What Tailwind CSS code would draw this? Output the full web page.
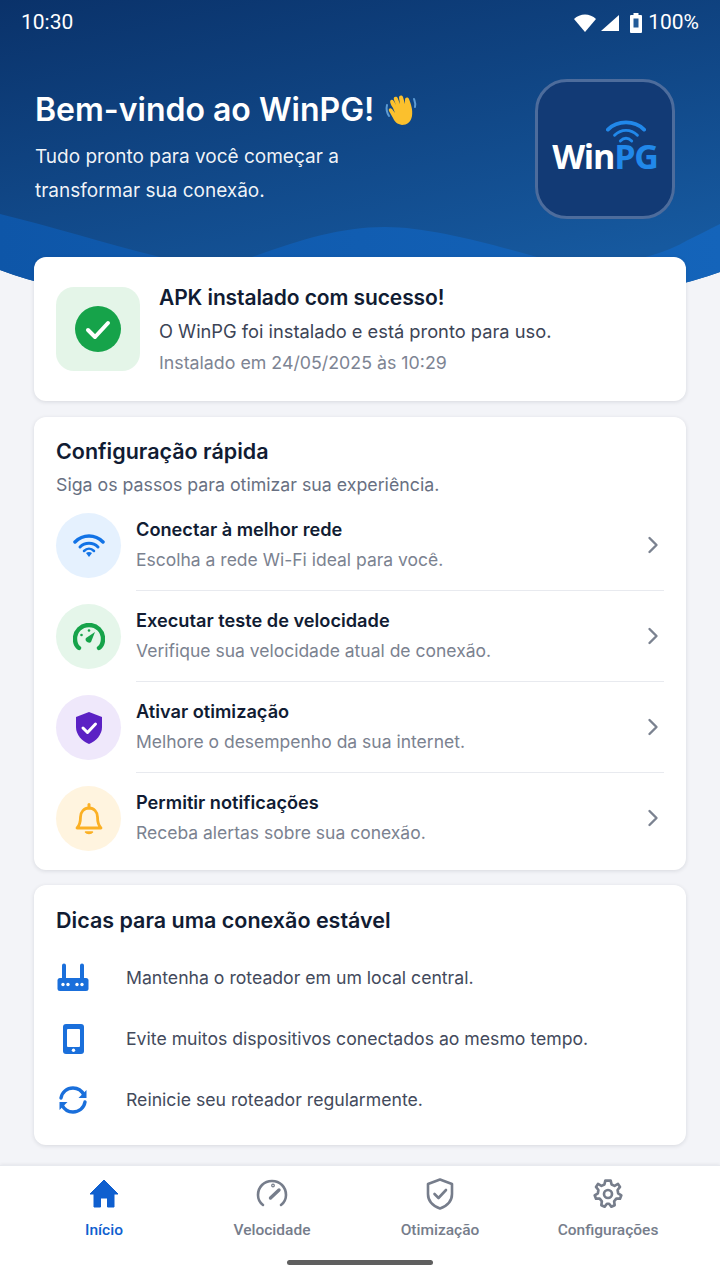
<!DOCTYPE html>
<html lang="pt-BR">
<head>
  <meta charset="UTF-8">
  <meta name="viewport" content="width=device-width, initial-scale=1">
  <title>WinPG - Início</title>
  <script src="https://cdn.jsdelivr.net/npm/@tailwindcss/browser@4"></script>
</head>
<body class="bg-[#f3f4f8] font-['Inter',sans-serif]">
<div class="relative w-[720px] h-[1280px] overflow-hidden flex flex-col">

  <!-- Header background -->
  <svg class="absolute left-0 top-0" width="720" height="300" viewBox="0 0 720 300">
    <defs>
      <linearGradient id="hdr" x1="0" y1="0" x2="0.5" y2="1">
        <stop offset="0" stop-color="#0a326a"/>
        <stop offset="1" stop-color="#16599f"/>
      </linearGradient>
      <linearGradient id="wave" x1="0" y1="0" x2="1" y2="0">
        <stop offset="0" stop-color="#0e56a8"/>
        <stop offset="1" stop-color="#1464ba"/>
      </linearGradient>
    </defs>
    <path d="M0 0H720V272Q610 312 360 312T0 270Z" fill="url(#hdr)"/>
    <path d="M0 214C50 226 110 245 160 257C190 266 220 264 252 257C300 240 340 227 385 227C430 227 490 244 537 257C590 272 650 262 688 240C700 234 710 229 720 224V272Q610 312 360 312T0 270Z" fill="url(#wave)"/>
  </svg>

  <!-- Status bar -->
  <div class="relative h-[44px] shrink-0 pl-[21px] pr-[21px] pt-[2px] flex items-center justify-between text-white font-['Roboto',sans-serif] text-[21px]">
    <span>10:30</span>
    <div class="flex items-center">
      <svg width="24" height="20" viewBox="0 0 24 20" class="mr-[3px]"><path d="M1 6C7 0 17 0 23 6L12 19Z" fill="#fff"/></svg>
      <svg width="20" height="18" viewBox="0 0 20 18" class="mr-[9px]"><path d="M19 1V17H1Z" fill="#fff"/></svg>
      <svg width="14" height="20" viewBox="0 0 14 20" class="mr-[5px]"><path d="M4.500 0H9.500V2H12Q13 2 13 3V19Q13 20 12 20H2Q1 20 1 19V3Q1 2 2 2H4.500Z" fill="#fff"/><rect x="4.500" y="5.500" width="5" height="9" fill="#235b98"/></svg>
      <span>100%</span>
    </div>
  </div>

  <!-- Hero -->
  <div class="relative h-[213px] shrink-0 pl-[35px] pr-[45px] flex justify-between">
    <div class="pt-[44px]">
      <h1 class="flex items-center text-white text-[32px] leading-[44px] font-semibold">
        Bem-vindo ao WinPG!
        <svg width="34" height="34" viewBox="0 0 34 34" class="ml-[10px]">
          <path d="M3 12C2 16 3 20 5 23M30 6C31 9 32 11 31 14" fill="none" stroke="#5b9bd5" stroke-width="2" stroke-linecap="round"/>
          <path d="M9 15C7 12 5 8 7 7C9 6 10 8 12 12L10 7C9 4 11 3 13 4C14 5 15 9 16 11L15 5C15 2 18 2 19 4L21 11L21 7C21 4 24 4 25 6C27 11 29 17 28 23C27 29 23 32 18 32C13 31 11 29 9 25L5 18C4 16 6 14 8 16L11 20Z" fill="#fbc02d"/>
        </svg>
      </h1>
      <p class="mt-[8px] text-white/95 text-[19px] leading-[34px]">Tudo pronto para você começar a<br>transformar sua conexão.</p>
    </div>
    <div class="mt-[35px] w-[140px] h-[140px] rounded-[32px] border-[3px] border-[#4d6c9c] bg-[#123a75] flex flex-col items-center">
      <svg width="40" height="25" viewBox="0 0 42 26" class="mt-[37px] ml-[42px]">
        <path d="M2 11C12 1 30 1 40 11" fill="none" stroke="#2188ea" stroke-width="4" stroke-linecap="round"/>
        <path d="M9 17C16 10 26 10 33 17" fill="none" stroke="#2188ea" stroke-width="3" stroke-linecap="round"/>
        <path d="M15 23C19 19 23 19 27 23" fill="none" stroke="#2188ea" stroke-width="3" stroke-linecap="round"/>
      </svg>
      <div class="-mt-[7px] text-[34px] leading-[38px] font-['Open_Sans',sans-serif] font-bold tracking-[-1.200px] text-white">Win<span class="text-[#2188ea]">PG</span></div>
    </div>
  </div>

  <!-- Install status -->
  <section class="relative mx-[34px] h-[144px] rounded-[12px] bg-white shadow-[0_1px_4px_rgba(15,23,42,0.12)] pl-[22px] flex items-center">
    <div class="w-[84px] h-[84px] rounded-[18px] bg-[#e4f5e8] flex items-center justify-center">
      <svg width="46" height="46" viewBox="0 0 46 46">
        <circle cx="23" cy="23" r="23" fill="#16a34a"/>
        <path d="M13 24L20 31L33 17" fill="none" stroke="#fff" stroke-width="4" stroke-linecap="round" stroke-linejoin="round"/>
      </svg>
    </div>
    <div class="ml-[19px]">
      <h2 class="text-[#111c33] text-[21px] leading-[28px] font-semibold tracking-[-0.1px]">APK instalado com sucesso!</h2>
      <p class="mt-[7px] text-[#3c4456] text-[18.300px] leading-[24px]">O WinPG foi instalado e está pronto para uso.</p>
      <p class="mt-[8px] text-[#7d8493] text-[17.800px] leading-[24px]">Instalado em 24/05/2025 às 10:29</p>
    </div>
  </section>

  <!-- Quick setup -->
  <section class="relative mx-[34px] mt-[16px] h-[453px] rounded-[12px] bg-white shadow-[0_1px_4px_rgba(15,23,42,0.12)] pl-[22px] pr-[22px] pt-[20px]">
    <h2 class="text-[#111c33] text-[21.500px] leading-[28px] font-semibold">Configuração rápida</h2>
    <p class="mt-[8px] text-[#687082] text-[17.750px] leading-[24px]">Siga os passos para otimizar sua experiência.</p>
    <div class="mt-[16px] flex flex-col">

      <div class="h-[91px] flex">
        <div class="w-[65px] h-[65px] rounded-full bg-[#e5f1fe] flex items-center justify-center shrink-0">
          <svg width="32" height="26" viewBox="0 0 32 26">
            <path d="M2 9C10 1 22 1 30 9" fill="none" stroke="#1273e6" stroke-width="3.500" stroke-linecap="round"/>
            <path d="M7 14C12 9 20 9 25 14" fill="none" stroke="#1273e6" stroke-width="3" stroke-linecap="round"/>
            <path d="M11 18C14 15 18 15 21 18" fill="none" stroke="#1273e6" stroke-width="2.500" stroke-linecap="round"/>
            <path d="M13 20C15 18.500 17 18.500 19 20L16 24Z" fill="#1273e6"/>
          </svg>
        </div>
        <div class="ml-[15px] flex-1 h-[78px] border-b border-[#e8eaef] flex items-start justify-between">
          <div>
            <h3 class="mt-[3px] text-[#111c33] text-[18.200px] leading-[26px] font-semibold">Conectar à melhor rede</h3>
            <p class="mt-[5px] text-[#7b8290] text-[17.500px] leading-[26px]">Escolha a rede Wi-Fi ideal para você.</p>
          </div>
          <svg width="12" height="18" viewBox="0 0 12 18" class="mt-[23px] mr-[5px]"><path d="M2.500 2L9.500 9L2.500 16" fill="none" stroke="#7b8290" stroke-width="2.400" stroke-linecap="round" stroke-linejoin="round"/></svg>
        </div>
      </div>

      <div class="h-[91px] flex">
        <div class="w-[65px] h-[65px] rounded-full bg-[#e5f6ea] flex items-center justify-center shrink-0">
          <svg width="32" height="28" viewBox="0 0 32 28">
            <path d="M6 25C3 23 2 19 2 16C2 8 8 2 16 2C24 2 30 8 30 16C30 19 29 23 26 25" fill="none" stroke="#16a34a" stroke-width="4.400" stroke-linecap="round"/>
            <path d="M13 15L22 9L18 19C16 21 11 18 13 15Z" fill="#16a34a"/>
            <circle cx="16" cy="7.500" r="1.300" fill="#16a34a"/><circle cx="8.500" cy="12" r="1.300" fill="#16a34a"/>
          </svg>
        </div>
        <div class="ml-[15px] flex-1 h-[78px] border-b border-[#e8eaef] flex items-start justify-between">
          <div>
            <h3 class="mt-[3px] text-[#111c33] text-[18.200px] leading-[26px] font-semibold">Executar teste de velocidade</h3>
            <p class="mt-[5px] text-[#7b8290] text-[17.500px] leading-[26px]">Verifique sua velocidade atual de conexão.</p>
          </div>
          <svg width="12" height="18" viewBox="0 0 12 18" class="mt-[23px] mr-[5px]"><path d="M2.500 2L9.500 9L2.500 16" fill="none" stroke="#7b8290" stroke-width="2.400" stroke-linecap="round" stroke-linejoin="round"/></svg>
        </div>
      </div>

      <div class="h-[91px] flex">
        <div class="w-[65px] h-[65px] rounded-full bg-[#efe8fb] flex items-center justify-center shrink-0">
          <svg width="28" height="32" viewBox="0 0 28 32">
            <path d="M14 0L27 5V15C27 23 21 29 14 32C7 29 1 23 1 15V5Z" fill="#5b21c4"/>
            <path d="M8 16L12.500 20.500L20.500 12" fill="none" stroke="#fff" stroke-width="3" stroke-linecap="round" stroke-linejoin="round"/>
          </svg>
        </div>
        <div class="ml-[15px] flex-1 h-[78px] border-b border-[#e8eaef] flex items-start justify-between">
          <div>
            <h3 class="mt-[3px] text-[#111c33] text-[18.200px] leading-[26px] font-semibold">Ativar otimização</h3>
            <p class="mt-[5px] text-[#7b8290] text-[17.500px] leading-[26px]">Melhore o desempenho da sua internet.</p>
          </div>
          <svg width="12" height="18" viewBox="0 0 12 18" class="mt-[23px] mr-[5px]"><path d="M2.500 2L9.500 9L2.500 16" fill="none" stroke="#7b8290" stroke-width="2.400" stroke-linecap="round" stroke-linejoin="round"/></svg>
        </div>
      </div>

      <div class="h-[91px] flex">
        <div class="w-[65px] h-[65px] rounded-full bg-[#fff4df] flex items-center justify-center shrink-0">
          <svg width="28" height="32" viewBox="0 0 28 32">
            <path d="M2 25H26C23 22 22.500 19 22.500 14C22.500 9 19 5 14 5C9 5 5.500 9 5.500 14C5.500 19 5 22 2 25Z" fill="none" stroke="#fbb024" stroke-width="2.800" stroke-linejoin="round"/>
            <path d="M14 1.500V5" stroke="#fbb024" stroke-width="3" stroke-linecap="round"/>
            <path d="M10.500 29C12 31 16 31 17.500 29Z" fill="#fbb024" stroke="#fbb024" stroke-width="1.500" stroke-linejoin="round"/>
          </svg>
        </div>
        <div class="ml-[15px] flex-1 flex items-start justify-between">
          <div>
            <h3 class="mt-[3px] text-[#111c33] text-[18.200px] leading-[26px] font-semibold">Permitir notificações</h3>
            <p class="mt-[5px] text-[#7b8290] text-[17.500px] leading-[26px]">Receba alertas sobre sua conexão.</p>
          </div>
          <svg width="12" height="18" viewBox="0 0 12 18" class="mt-[23px] mr-[5px]"><path d="M2.500 2L9.500 9L2.500 16" fill="none" stroke="#7b8290" stroke-width="2.400" stroke-linecap="round" stroke-linejoin="round"/></svg>
        </div>
      </div>
    </div>
  </section>

  <!-- Tips -->
  <section class="relative mx-[34px] mt-[15px] h-[260px] rounded-[12px] bg-white shadow-[0_1px_4px_rgba(15,23,42,0.12)] pl-[22px] pr-[22px] pt-[21px]">
    <h2 class="text-[#111c33] text-[21.500px] leading-[28px] font-semibold">Dicas para uma conexão estável</h2>
    <div class="mt-[26px] flex flex-col gap-[25px] text-[#434a5c] text-[17.650px] leading-[36px]">
      <div class="flex items-center h-[36px]">
        <svg width="32" height="30" viewBox="0 0 32 30" class="shrink-0 ml-[1px] mr-[37px]">
          <path d="M7 2.500V16M25 2.500V16" stroke="#1a6fdb" stroke-width="4" stroke-linecap="round"/>
          <rect x="0.500" y="15" width="31" height="13" rx="2.500" fill="#1a6fdb"/>
          <circle cx="6" cy="21.500" r="1.700" fill="#fff"/><circle cx="11" cy="21.500" r="1.700" fill="#fff"/><circle cx="20" cy="21.500" r="1.700" fill="#fff"/><circle cx="25" cy="21.500" r="1.700" fill="#fff"/>
        </svg>
        <span>Mantenha o roteador em um local central.</span>
      </div>
      <div class="flex items-center h-[36px]">
        <svg width="32" height="30" viewBox="0 0 32 30" class="shrink-0 ml-[1px] mr-[37px]">
          <rect x="6" y="0" width="21" height="30" rx="3" fill="#1a6fdb"/>
          <rect x="10" y="5" width="13" height="18" rx="1" fill="#fff"/>
          <circle cx="16.500" cy="26.300" r="1.700" fill="#fff"/>
        </svg>
        <span>Evite muitos dispositivos conectados ao mesmo tempo.</span>
      </div>
      <div class="flex items-center h-[36px]">
        <svg width="32" height="30" viewBox="0 0 32 30" class="shrink-0 ml-[1px] mr-[37px]">
          <path d="M4 13C5 7 10 3 16 3C21 3 25 6 27 10" fill="none" stroke="#1a6fdb" stroke-width="3.400" stroke-linecap="round"/>
          <path d="M29.500 5V13H21.500Z" fill="#1a6fdb"/>
          <path d="M28 17C27 23 22 27 16 27C11 27 7 24 5 20" fill="none" stroke="#1a6fdb" stroke-width="3.400" stroke-linecap="round"/>
          <path d="M2.500 25V17H10.500Z" fill="#1a6fdb"/>
        </svg>
        <span>Reinicie seu roteador regularmente.</span>
      </div>
    </div>
  </section>

  <!-- Bottom nav -->
  <nav class="relative mt-[20px] flex-1 bg-white border-t border-[#e8eaef] shadow-[0_-1px_3px_rgba(15,23,42,0.06)]">
    <div class="grid grid-cols-4 pl-[20px] pr-[28px] pt-[12px] text-[15.500px] leading-[20px] font-['Roboto',sans-serif] font-medium text-[#767d8b]">
      <div class="flex flex-col items-center gap-[10px] text-[#0f5fcf]">
        <svg width="32" height="32" viewBox="0 0 32 32"><path d="M16 2L30 16H26V29H19.500V20H12.500V29H6V16H2Z" fill="#0f5fcf" stroke="#0f5fcf" stroke-linejoin="round"/></svg>
        <span>Início</span>
      </div>
      <div class="flex flex-col items-center gap-[10px]">
        <svg width="32" height="32" viewBox="0 0 32 32" fill="none" stroke="#767d8b" stroke-width="2.600" stroke-linecap="round">
          <path d="M7 27C3 24 2 20 2 17C2 9 8 3 16 3C24 3 30 9 30 17C30 20 29 24 25 27"/>
          <path d="M14.500 20L23 12" stroke-width="3.400"/>
          <circle cx="17" cy="7.500" r="0.600"/>
        </svg>
        <span>Velocidade</span>
      </div>
      <div class="flex flex-col items-center gap-[10px]">
        <svg width="32" height="32" viewBox="0 0 32 32" fill="none" stroke="#767d8b" stroke-width="2.600" stroke-linecap="round" stroke-linejoin="round">
          <path d="M16 1.500L28 6V16C28 23 23 28 16 30.500C9 28 4 23 4 16V6Z"/>
          <path d="M10.500 16L14.500 20L22 12"/>
        </svg>
        <span>Otimização</span>
      </div>
      <div class="flex flex-col items-center gap-[10px]">
        <svg width="32" height="32" viewBox="0 0 24 24" fill="none" stroke="#767d8b" stroke-width="2" stroke-linecap="round" stroke-linejoin="round">
          <path d="M12 2L14 2L14.700 4.900L16.900 5.900L19.500 4.400L21 6.700L19.200 9L19.600 11.500L22 13L21 15.500L18.200 15.500L16.600 17.500L17 20.400L14.500 21.500L12.800 19.300H11.200L9.500 21.500L7 20.400L7.400 17.500L5.800 15.500L3 15.500L2 13L4.400 11.500L4.800 9L3 6.700L4.500 4.400L7.100 5.900L9.300 4.900L10 2Z"/>
          <circle cx="12" cy="12" r="3"/>
        </svg>
        <span>Configurações</span>
      </div>
    </div>
    <div class="absolute left-[287px] bottom-[15px] w-[146px] h-[5px] rounded-full bg-[#5f5f5f]"></div>
  </nav>
</div>
</body>
</html>
